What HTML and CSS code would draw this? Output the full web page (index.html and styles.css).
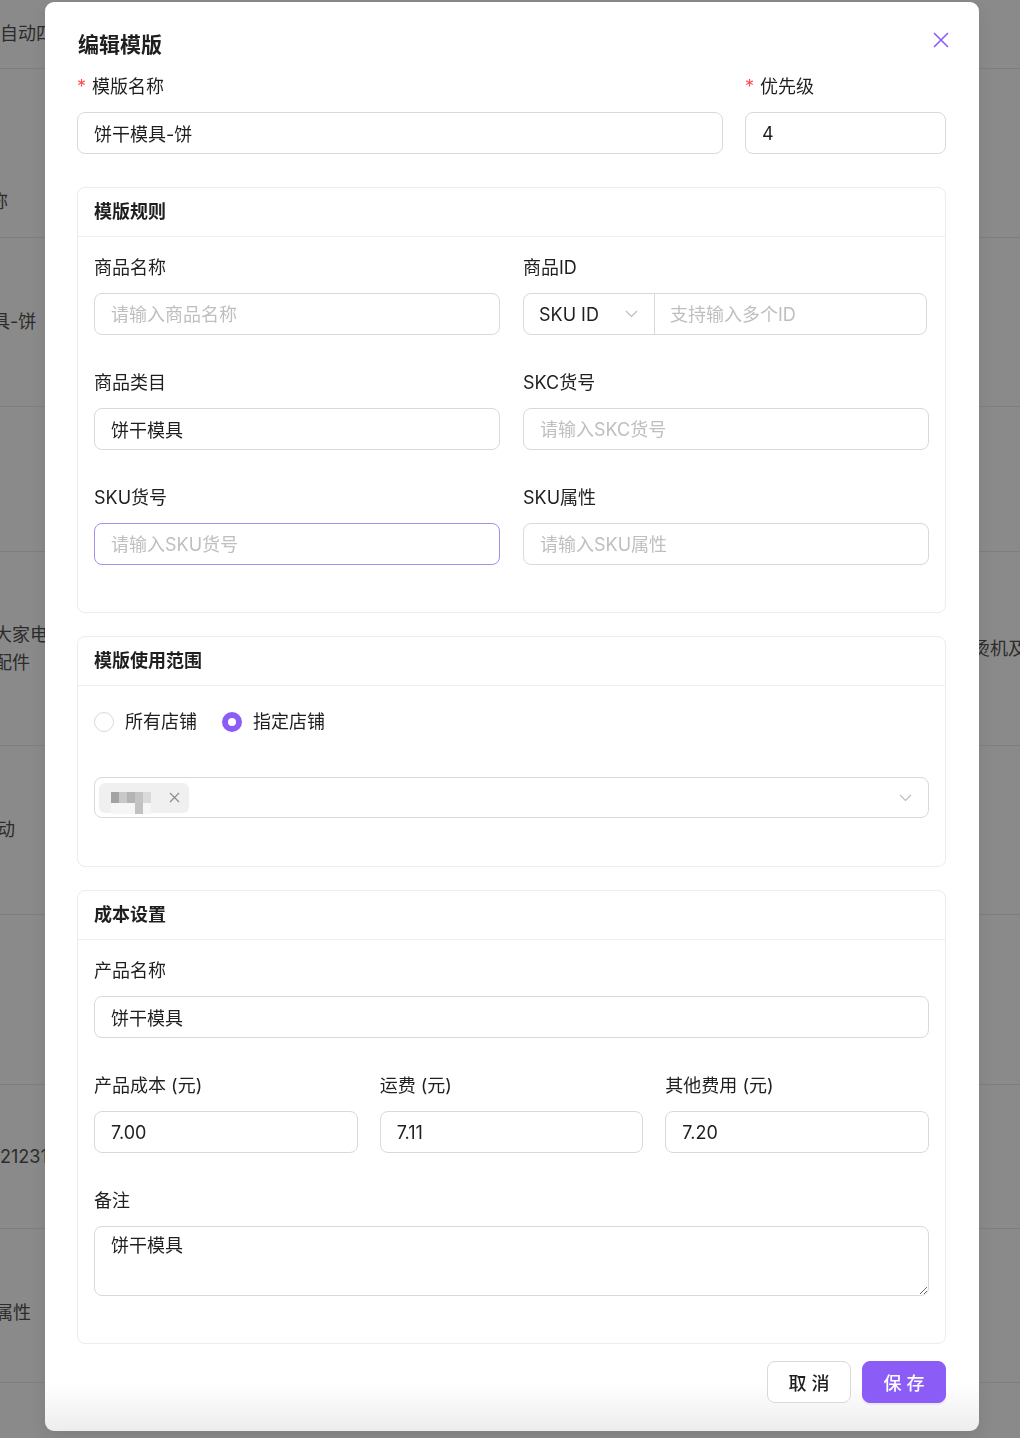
FILE: index.html
```html
<!DOCTYPE html>
<html lang="zh-CN">

<head>
  <meta charset="UTF-8">
  <meta name="viewport" content="width=device-width, initial-scale=1.0">
  <link rel="stylesheet" href="styles.css">
</head>

<body>
  <!-- page behind the modal -->
  <div class="page">
    <div class="bg-row row-0"><div class="bg-cell"><span class="bg-text off-0">自动四轮定位</span></div></div>
    <div class="bg-row row-1 row-bottom"><div class="bg-cell"><span class="bg-text off-10">称</span></div></div>
    <div class="bg-row row-2"><div class="bg-cell"><span class="bg-text off-8">具-饼</span></div></div>
    <div class="bg-row row-3"></div>
    <div class="bg-row row-4">
      <div class="bg-cell"><span class="bg-text off-6">大家电<br>配件</span></div>
      <span class="bg-text bg-right">烫机及配件</span>
    </div>
    <div class="bg-row row-5"><div class="bg-cell"><span class="bg-text off-3">动</span></div></div>
    <div class="bg-row row-6"></div>
    <div class="bg-row row-7"><div class="bg-cell"><span class="bg-text off-0">21231231</span></div></div>
    <div class="bg-row row-8 row-low"><div class="bg-cell"><span class="bg-text off-5">属性</span></div></div>
    <div class="bg-row row-9"></div>
  </div>

  <div class="overlay">
    <div class="modal">
      <h2 class="modal-title">编辑模版</h2>
      <button class="modal-close" type="button">
        <svg width="16" height="16" viewBox="0 0 16 16"><path d="M1 1L15 15M15 1L1 15" stroke="#8b5cf6" stroke-width="1.6" fill="none" /></svg>
      </button>

      <div class="top-row">
        <div class="field name-field">
          <label class="field-label"><span class="required">*</span>模版名称</label>
          <input class="text-input" type="text" value="饼干模具-饼">
        </div>
        <div class="field priority-field">
          <label class="field-label"><span class="required">*</span>优先级</label>
          <input class="text-input" type="text" value="4">
        </div>
      </div>

      <!-- 模版规则 -->
      <section class="card">
        <div class="card-head">模版规则</div>
        <div class="card-body grid-2">
          <div class="field">
            <label class="field-label">商品名称</label>
            <input class="text-input" type="text" placeholder="请输入商品名称">
          </div>
          <div class="field">
            <label class="field-label">商品ID</label>
            <div class="input-group">
              <div class="group-select">
                <span>SKU ID</span>
                <svg class="chevron" width="13" height="8" viewBox="0 0 13 8"><path d="M1 1L6.5 6.5L12 1" stroke="#bdbdbd" stroke-width="1.2" fill="none" /></svg>
              </div>
              <input class="group-input" type="text" placeholder="支持输入多个ID">
            </div>
          </div>
          <div class="field">
            <label class="field-label">商品类目</label>
            <input class="text-input" type="text" value="饼干模具">
          </div>
          <div class="field">
            <label class="field-label">SKC货号</label>
            <input class="text-input" type="text" placeholder="请输入SKC货号">
          </div>
          <div class="field">
            <label class="field-label">SKU货号</label>
            <input class="text-input focused" type="text" placeholder="请输入SKU货号">
          </div>
          <div class="field">
            <label class="field-label">SKU属性</label>
            <input class="text-input" type="text" placeholder="请输入SKU属性">
          </div>
        </div>
      </section>

      <!-- 模版使用范围 -->
      <section class="card">
        <div class="card-head">模版使用范围</div>
        <div class="card-body scope-body">
          <div class="radio-group">
            <label class="radio"><span class="radio-dot"></span>所有店铺</label>
            <label class="radio"><span class="radio-dot checked"></span>指定店铺</label>
          </div>
          <div class="tag-select">
            <span class="tag">
              <svg class="mosaic" width="50" height="24" viewBox="0 0 50 24">
                <rect x="0" y="1" width="8" height="11" fill="#a3a3a3" />
                <rect x="8" y="1" width="8" height="11" fill="#c9c9c9" />
                <rect x="16" y="1" width="8" height="11" fill="#b4b4b4" />
                <rect x="24" y="1" width="8" height="11" fill="#c4c4c4" />
                <rect x="32" y="1" width="8" height="11" fill="#dadada" />
                <rect x="0" y="12" width="40" height="11" fill="#f6f6f6" />
                <rect x="24" y="12" width="8" height="11" fill="#c2c2c2" />
              </svg>
              <svg class="tag-close" width="11" height="11" viewBox="0 0 11 11"><path d="M1 1L10 10M10 1L1 10" stroke="#8c8c8c" stroke-width="1.2" fill="none" /></svg>
            </span>
            <svg class="chevron" width="13" height="8" viewBox="0 0 13 8"><path d="M1 1L6.5 6.5L12 1" stroke="#bdbdbd" stroke-width="1.2" fill="none" /></svg>
          </div>
        </div>
      </section>

      <!-- 成本设置 -->
      <section class="card">
        <div class="card-head">成本设置</div>
        <div class="card-body grid-3">
          <div class="field span-all">
            <label class="field-label">产品名称</label>
            <input class="text-input" type="text" value="饼干模具">
          </div>
          <div class="field">
            <label class="field-label">产品成本 (元)</label>
            <input class="text-input" type="text" value="7.00">
          </div>
          <div class="field">
            <label class="field-label">运费 (元)</label>
            <input class="text-input" type="text" value="7.11">
          </div>
          <div class="field">
            <label class="field-label">其他费用 (元)</label>
            <input class="text-input" type="text" value="7.20">
          </div>
          <div class="field span-all">
            <label class="field-label">备注</label>
            <textarea class="text-area">饼干模具</textarea>
          </div>
        </div>
      </section>

      <div class="modal-footer">
        <button class="btn" type="button">取 消</button>
        <button class="btn btn-primary" type="button">保 存</button>
      </div>
    </div>
  </div>
</body>

</html>
```

FILE: styles.css
```css
    body, html {
      margin: 0;
      padding: 0;
      font-family: Inter, "Noto Sans CJK SC", sans-serif;
      background-color: #8a8a8a;
      color: #1f1f1f;
      overflow: hidden;
    }

    /* Page behind the overlay */
    .page {
      font-size: 18px;
      color: #2c2c2c;
    }

    .bg-row {
      display: flex;
      align-items: center;
      box-sizing: border-box;
      border-bottom: 1px solid #7e7e7e;
      line-height: 28px;
      white-space: nowrap;
    }

    .bg-cell {
      width: 45px;
      overflow: hidden;
    }

    .bg-text {
      display: block;
    }

    .row-0 { height: 69px; }
    .row-1 { height: 169px; }
    .row-2 { height: 169px; }
    .row-3 { height: 145px; }
    .row-4 { height: 194px; }
    .row-5 { height: 169px; }
    .row-6 { height: 170px; }
    .row-7 { height: 144px; }
    .row-8 { height: 154px; }
    .row-9 { height: 60px; border-bottom: none; }

    .row-bottom {
      align-items: flex-end;
      padding-bottom: 21px;
    }

    .row-low {
      padding-top: 14px;
    }

    .off-0 { margin-left: 0; }
    .off-3 { margin-left: -3px; }
    .off-5 { margin-left: -5px; }
    .off-6 { margin-left: -6px; }
    .off-8 { margin-left: -8px; }
    .off-10 { margin-left: -10px; }

    .bg-right {
      margin-left: auto;
      width: 48px;
      overflow: hidden;
    }

    /* Modal */
    .overlay {
      position: fixed;
      inset: 0;
      display: flex;
      justify-content: center;
      align-items: flex-start;
      padding: 2px 0 0 4px;
    }

    .modal {
      position: relative;
      width: 934px;
      box-sizing: border-box;
      padding: 29px 33px 28px 32px;
      border-radius: 9px;
      background: linear-gradient(to bottom, #ffffff calc(100% - 48px), #ededed 100%);
      box-shadow: 0 6px 16px rgba(0, 0, 0, 0.08);
    }

    .modal-title {
      margin: 0 0 15px 1px;
      font-size: 21px;
      line-height: 28px;
      font-weight: 700;
      color: #1f1f1f;
    }

    .modal-close {
      position: absolute;
      top: 30px;
      right: 30px;
      width: 16px;
      height: 16px;
      padding: 0;
      border: none;
      background: none;
      cursor: pointer;
    }

    .modal-close svg {
      display: block;
    }

    .top-row {
      display: flex;
      gap: 22px;
    }

    .name-field {
      flex: 1;
    }

    .priority-field {
      width: 201px;
    }

    .field {
      display: flex;
      flex-direction: column;
      min-width: 0;
    }

    .field-label {
      font-size: 18px;
      line-height: 24px;
      margin: 1px 0 13px 0;
      color: #1f1f1f;
    }

    .required {
      color: #ff4d4f;
      font-size: 18px;
      margin-right: 6px;
    }

    .text-input {
      height: 42px;
      box-sizing: border-box;
      width: 100%;
      padding: 0 16px;
      border: 1px solid #d9d9d9;
      border-radius: 8px;
      font-family: inherit;
      font-size: 18px;
      color: #1f1f1f;
      background: #ffffff;
      outline: none;
    }

    .text-input::placeholder,
    .group-input::placeholder {
      color: #bfbfbf;
    }

    .text-input.focused {
      border-color: #a88cf0;
    }

    /* Cards */
    .card {
      margin-top: 33px;
      border: 1px solid #ececec;
      border-radius: 8px;
    }

    .card + .card {
      margin-top: 23px;
    }

    .card-head {
      height: 48px;
      line-height: 48px;
      padding: 0 16px;
      font-size: 18px;
      font-weight: 700;
      border-bottom: 1px solid #efefef;
    }

    .card-body {
      padding: 18px 16px 12px 16px;
    }

    .card-body .field {
      margin-bottom: 35px;
    }

    .grid-2 {
      display: grid;
      grid-template-columns: 1fr 1fr;
      column-gap: 23px;
    }

    .grid-3 {
      display: grid;
      grid-template-columns: 1fr 1fr 1fr;
      column-gap: 22px;
    }

    .span-all {
      grid-column: 1 / -1;
    }

    /* Select + input */
    .input-group {
      display: flex;
      height: 42px;
      box-sizing: border-box;
      border: 1px solid #d9d9d9;
      border-radius: 8px;
      margin-right: 2px;
    }

    .group-select {
      width: 131px;
      box-sizing: border-box;
      display: flex;
      align-items: center;
      justify-content: space-between;
      padding: 0 16px 0 15px;
      border-right: 1px solid #d9d9d9;
      font-size: 18px;
    }

    .group-input {
      flex: 1;
      min-width: 0;
      border: none;
      outline: none;
      padding: 0 15px;
      font-family: inherit;
      font-size: 18px;
      background: transparent;
      border-radius: 0 8px 8px 0;
    }

    .chevron {
      display: block;
    }

    /* Scope */
    .scope-body {
      padding: 24px 16px 48px 16px;
    }

    .radio-group {
      display: flex;
      gap: 25px;
      margin-bottom: 43px;
    }

    .radio {
      display: flex;
      align-items: center;
      gap: 11px;
      font-size: 18px;
      line-height: 24px;
    }

    .radio-dot {
      width: 20px;
      height: 20px;
      box-sizing: border-box;
      border: 1px solid #d9d9d9;
      border-radius: 50%;
      background: #ffffff;
    }

    .radio-dot.checked {
      border: 6px solid #8b5cf6;
      background: #ffffff;
    }

    .tag-select {
      height: 41px;
      box-sizing: border-box;
      display: flex;
      align-items: center;
      justify-content: space-between;
      padding: 0 16px 0 4px;
      border: 1px solid #d9d9d9;
      border-radius: 8px;
    }

    .tag {
      display: flex;
      align-items: center;
      gap: 12px;
      height: 30px;
      padding: 0 9px 0 12px;
      background: #f0f0f0;
      border-radius: 6px;
    }

    .mosaic {
      display: block;
      margin-top: 10px;
      margin-right: -4px;
    }

    .tag-close {
      display: block;
    }

    .text-area {
      height: 70px;
      box-sizing: border-box;
      width: 100%;
      padding: 7px 16px;
      border: 1px solid #d9d9d9;
      border-radius: 8px;
      font-family: inherit;
      font-size: 18px;
      line-height: 24px;
      color: #1f1f1f;
      outline: none;
      resize: vertical;
    }

    /* Footer */
    .modal-footer {
      display: flex;
      justify-content: flex-end;
      gap: 11px;
      margin-top: 17px;
    }

    .btn {
      width: 84px;
      height: 42px;
      border: 1px solid #d9d9d9;
      border-radius: 8px;
      background: #ffffff;
      font-family: inherit;
      font-size: 18px;
      font-weight: 500;
      color: #1f1f1f;
      cursor: pointer;
    }

    .btn-primary {
      background: #8b5cf6;
      border-color: #8b5cf6;
      color: #ffffff;
      box-shadow: 0 2px 0 rgba(139, 92, 246, 0.1);
    }
```
